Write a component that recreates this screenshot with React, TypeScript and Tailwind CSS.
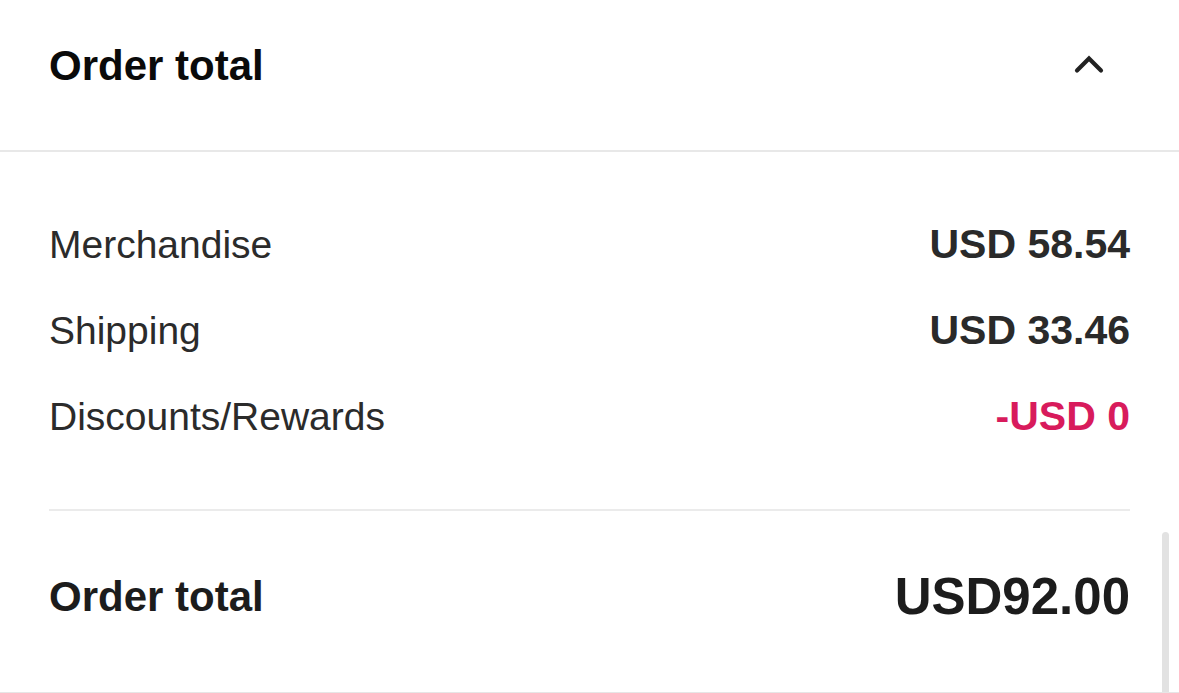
import { ReactNode } from "react";

type RowProps = {
  label: string;
  value: ReactNode;
  highlight?: boolean;
};

function SummaryRow({ label, value, highlight = false }: RowProps) {
  return (
    <div className="flex items-baseline justify-between">
      <span className="text-[39px] leading-[45px] text-[#2b2b2b]">{label}</span>
      <span
        className={`text-[41px] font-bold leading-[45px] ${
          highlight ? "text-[#d81b5c]" : "text-[#2a2a2a]"
        }`}
      >
        {value}
      </span>
    </div>
  );
}

function ChevronUp() {
  return (
    <svg width="32" height="20" viewBox="0 0 32 20" fill="none">
      <path
        d="M4 16.5L16 4.5L28 16.5"
        stroke="#222"
        strokeWidth="4.2"
        strokeLinecap="round"
        strokeLinejoin="miter"
      />
    </svg>
  );
}

export default function App() {
  return (
    <div
      className="relative h-[693px] w-[1179px] overflow-hidden bg-white"
      style={{ fontFamily: '"Liberation Sans", Arial, sans-serif' }}
    >
      {/* Collapsible header */}
      <div className="flex h-[152px] items-start justify-between border-b-2 border-[#e8e8e8] pl-[49px] pr-[74px] pt-[42px]">
        <h2 className="text-[42px] font-bold leading-[48px] text-[#0a0a0a]">Order total</h2>
        <div className="mt-[12px]">
          <ChevronUp />
        </div>
      </div>

      {/* Breakdown */}
      <div className="px-[49px] pt-[70px]">
        <div className="flex flex-col gap-[41px]">
          <SummaryRow label="Merchandise" value="USD 58.54" />
          <SummaryRow label="Shipping" value="USD 33.46" />
          <SummaryRow label="Discounts/Rewards" value="-USD 0" highlight />
        </div>

        <div className="mt-[70px] h-[2px] bg-[#ebebeb]" />

        <div className="flex h-[60px] items-center justify-between mt-[56px]">
          <span className="text-[42px] font-bold leading-[48px] text-[#1c1c1c]">Order total</span>
          <span className="text-[51px] font-bold leading-[60px] text-[#1c1c1c]">USD92.00</span>
        </div>
      </div>

      {/* scrollbar thumb */}
      <div className="absolute right-[10px] top-[532px] bottom-0 w-[7px] rounded-t-full bg-[#e2e2e2]" />
      <div className="absolute bottom-0 left-0 right-0 h-px bg-[#e6e6e6]" />
    </div>
  );
}
